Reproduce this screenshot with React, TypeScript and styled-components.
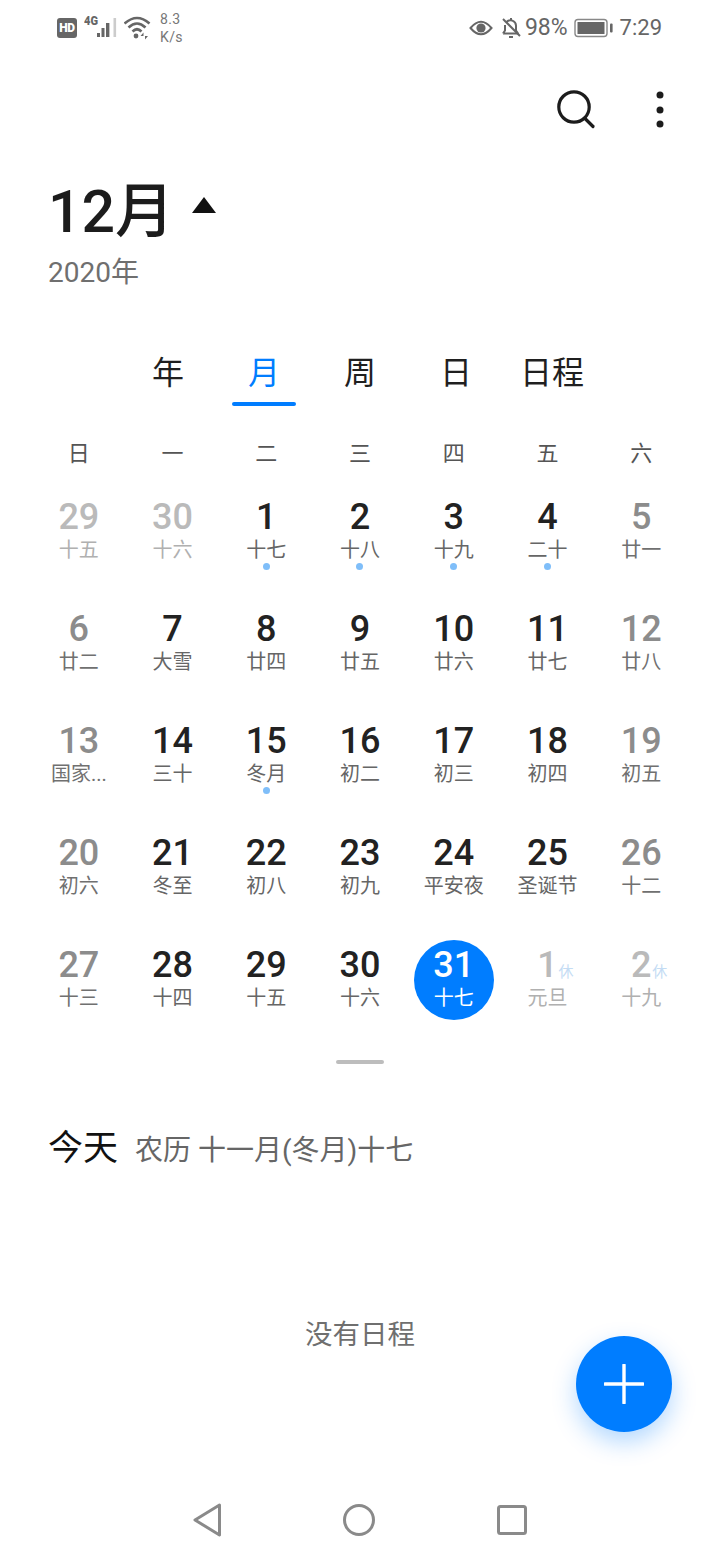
import React from "react";
import styled, { createGlobalStyle } from "styled-components";

const GlobalStyle = createGlobalStyle`
  html, body {
    margin: 0;
    padding: 0;
    background: #fff;
  }
  * {
    box-sizing: border-box;
  }
  body {
    font-family: Roboto, "Noto Sans CJK SC", sans-serif;
  }
`;

const Page = styled.div`
  position: relative;
  width: 720px;
  height: 1560px;
  overflow: hidden;
  background: #fff;
  display: flex;
  flex-direction: column;
`;

// status bar
const StatusBar = styled.div`
  height: 54px;
  padding: 1px 58px 0 57px;
  display: flex;
  align-items: center;
  justify-content: space-between;
  color: #6b6b6b;
`;

const StatusGroup = styled.div`
  display: flex;
  align-items: center;
`;

const StatusIcon = styled.svg<{ $ml?: number }>`
  display: block;
  flex: none;
  margin-left: ${(p) => p.$ml ?? 0}px;
`;

const HdBadge = styled.span`
  width: 20px;
  height: 20px;
  border-radius: 3px;
  background: #666;
  color: #fff;
  font-size: 12px;
  font-weight: 900;
  display: flex;
  align-items: center;
  justify-content: center;
  letter-spacing: -0.3px;
`;

const SignalWrap = styled.div`
  position: relative;
  width: 34px;
  height: 24px;
  margin-left: 7px;
`;

const FourG = styled.span`
  position: absolute;
  left: 0;
  top: -2px;
  font-size: 13px;
  line-height: 14px;
  font-weight: 900;
  color: #666;
  transform: scaleX(0.85);
  transform-origin: left top;
`;

const SpeedText = styled.div`
  margin-left: 8px;
  font-size: 14px;
  line-height: 18px;
  color: #777;
  letter-spacing: 0.4px;
`;

const StatusText = styled.span<{ $ml: number; $size: number }>`
  margin-left: ${(p) => p.$ml}px;
  font-size: ${(p) => p.$size}px;
  color: #666;
  line-height: 30px;
`;

// top toolbar
const Toolbar = styled.div`
  height: 112px;
  padding: 0 56px 0 0;
  display: flex;
  align-items: center;
  justify-content: flex-end;
  gap: 60px;
`;

// title block
const TitleBlock = styled.div`
  height: 177px;
  padding: 0 0 0 48px;
`;

const MonthRow = styled.div`
  display: flex;
  align-items: center;
  height: 76px;
  margin-top: 8px;
`;

const MonthText = styled.span`
  font-size: 59px;
  font-weight: 500;
  color: #1c1c1c;
  line-height: 76px;
`;

const Caret = styled.span`
  width: 0;
  height: 0;
  margin: -14px 0 0 18px;
  border-left: 12px solid transparent;
  border-right: 12px solid transparent;
  border-bottom: 16px solid #111;
`;

const YearText = styled.div`
  margin-top: 5px;
  font-size: 28px;
  line-height: 36px;
  color: #6f6f6f;
`;

// view tabs
const Tabs = styled.div`
  height: 66px;
  display: flex;
  justify-content: center;
`;

const Tab = styled.div<{ $active?: boolean }>`
  position: relative;
  width: 96px;
  height: 44px;
  text-align: center;
  font-size: 32px;
  line-height: 44px;
  margin-top: 8px;
  white-space: nowrap;
  color: ${(p) => (p.$active ? "#007dff" : "#1f1f1f")};

  ${(p) =>
    p.$active &&
    `&::after {
      content: "";
      position: absolute;
      left: 16px;
      top: 51px;
      width: 64px;
      height: 4px;
      border-radius: 2px;
      background: #007dff;
    }`}
`;

// calendar
const Weekdays = styled.div`
  margin: 14px 0 13px;
  padding: 0 32px;
  height: 56px;
  display: grid;
  grid-template-columns: repeat(7, 1fr);
  align-items: center;
  text-align: center;
  font-size: 22px;
  color: #555;
`;

const Grid = styled.div`
  padding: 0 32px;
  display: grid;
  grid-template-columns: repeat(7, 1fr);
  grid-auto-rows: 112px;
  justify-items: center;
`;

const DayBody = styled.div<{ $today?: boolean }>`
  position: relative;
  width: 80px;
  height: 80px;
  padding-top: 2px;
  border-radius: 50%;
  text-align: center;
  background: ${(p) => (p.$today ? "#007dff" : "transparent")};
`;

const tones = {
  normal: { num: "#222222", lunar: "#666666" },
  weekend: { num: "#8c8c8c", lunar: "#707070" },
  faded: { num: "#bababa", lunar: "#b0b0b0" },
  today: { num: "#ffffff", lunar: "#ffffff" },
};

type Tone = keyof typeof tones;

const DayNumber = styled.div<{ $tone: Tone }>`
  font-size: 36px;
  font-weight: 500;
  line-height: 46px;
  color: ${(p) => tones[p.$tone].num};
`;

const Lunar = styled.div<{ $tone: Tone }>`
  margin: 0 -6px;
  font-size: 20px;
  line-height: 20px;
  white-space: nowrap;
  color: ${(p) => tones[p.$tone].lunar};
`;

const EventDot = styled.div`
  width: 7px;
  height: 7px;
  margin: 3px auto 0;
  border-radius: 50%;
  background: #7fbef9;
`;

const RestBadge = styled.span`
  position: absolute;
  left: 51px;
  top: 23px;
  font-size: 15px;
  line-height: 18px;
  color: #c4dcf4;
`;

const Handle = styled.div`
  width: 48px;
  height: 4px;
  margin: 8px auto 0;
  border-radius: 2px;
  background: #bdbdbd;
`;

// today section
const TodayRow = styled.div`
  margin-top: 63px;
  padding-left: 48px;
  display: flex;
  align-items: baseline;
  gap: 17px;
`;

const TodayTitle = styled.span`
  font-size: 35px;
  font-weight: 400;
  line-height: 44px;
  color: #111;
`;

const TodayLunar = styled.span`
  font-size: 28px;
  color: #666;
`;

const EmptyText = styled.div`
  margin-top: 144px;
  text-align: center;
  font-size: 27.5px;
  line-height: 40px;
  color: #6f6f6f;
`;

const Fab = styled.button`
  position: absolute;
  left: 576px;
  top: 1336px;
  width: 96px;
  height: 96px;
  padding: 0;
  border: 0;
  border-radius: 50%;
  background: #007dff;
  box-shadow: 0 10px 24px rgba(0, 125, 255, 0.3);
  display: flex;
  align-items: center;
  justify-content: center;
`;

const NavBar = styled.div`
  margin-top: auto;
  height: 80px;
  display: flex;
  justify-content: center;
  align-items: center;
  gap: 122px;
`;

type Day = {
  n: number;
  lunar: string;
  tone: Tone;
  dot?: boolean;
  rest?: boolean;
};

const d = (n: number, lunar: string, tone: Tone = "normal", dot = false, rest = false): Day => ({
  n,
  lunar,
  tone,
  dot,
  rest,
});

const days: Day[] = [
  d(29, "十五", "faded"), d(30, "十六", "faded"), d(1, "十七", "normal", true), d(2, "十八", "normal", true),
  d(3, "十九", "normal", true), d(4, "二十", "normal", true), d(5, "廿一", "weekend"),
  d(6, "廿二", "weekend"), d(7, "大雪"), d(8, "廿四"), d(9, "廿五"), d(10, "廿六"), d(11, "廿七"), d(12, "廿八", "weekend"),
  d(13, "国家...", "weekend"), d(14, "三十"), d(15, "冬月", "normal", true), d(16, "初二"), d(17, "初三"), d(18, "初四"),
  d(19, "初五", "weekend"),
  d(20, "初六", "weekend"), d(21, "冬至"), d(22, "初八"), d(23, "初九"), d(24, "平安夜"), d(25, "圣诞节"), d(26, "十二", "weekend"),
  d(27, "十三", "weekend"), d(28, "十四"), d(29, "十五"), d(30, "十六"), d(31, "十七", "today"),
  d(1, "元旦", "faded", false, true), d(2, "十九", "faded", false, true),
];

const weekdays = ["日", "一", "二", "三", "四", "五", "六"];
const tabs = ["年", "月", "周", "日", "日程"];

const App: React.FC = () => (
  <Page>
    <GlobalStyle />
    <StatusBar>
      <StatusGroup>
        <HdBadge>HD</HdBadge>
        <SignalWrap>
          <FourG>4G</FourG>
          <svg width="34" height="24" viewBox="0 0 34 24">
            <rect x="13" y="17" width="3" height="4" fill="#666" />
            <rect x="17.5" y="12" width="3" height="9" fill="#666" />
            <rect x="22" y="7" width="3.4" height="14" fill="#666" />
            <rect x="29.5" y="2" width="2.6" height="19" fill="#ccc" />
          </svg>
        </SignalWrap>
        <StatusIcon width="28" height="24" viewBox="0 0 28 24" fill="none" $ml={6}>
          <path d="M0.5 7.5 Q13 -3.5 25.5 7.5" stroke="#666" strokeWidth="2.6" />
          <path d="M4.5 11.5 Q13 3.5 21.5 11.5" stroke="#666" strokeWidth="2.6" />
          <path d="M8.5 15.5 Q13 11 17.5 15.5" stroke="#666" strokeWidth="2.6" />
          <circle cx="12" cy="20" r="2.4" fill="#666" />
          <path d="M19.5 16.5 l-3 3.5 h3 z M21 23.5 l3 -3.5 h-3 z" fill="#666" />
        </StatusIcon>
        <SpeedText>
          8.3
          <br />
          K/s
        </SpeedText>
      </StatusGroup>
      <StatusGroup>
        <StatusIcon width="24" height="18" viewBox="0 0 24 18" fill="none">
          <path d="M1.5 9 Q12 -3.5 22.5 9 Q12 21.5 1.5 9 Z" stroke="#666" strokeWidth="2" />
          <circle cx="12" cy="9" r="4.6" fill="#666" />
        </StatusIcon>
        <StatusIcon width="22" height="24" viewBox="0 0 22 24" fill="none" $ml={7}>
          <path
            d="M3 17.5 h15 l-2 -3 v-5 a5.5 5.5 0 0 0 -9.5 -3.5 M5 9 v5.5 l-2 3"
            stroke="#666"
            strokeWidth="2"
            strokeLinejoin="round"
          />
          <path d="M9 21 h4" stroke="#666" strokeWidth="2" />
          <path d="M3 3 L20 20" stroke="#666" strokeWidth="2" />
          <path d="M11 2 v2" stroke="#666" strokeWidth="2" />
        </StatusIcon>
        <StatusText $ml={3} $size={23}>98%</StatusText>
        <StatusIcon width="40" height="20" viewBox="0 0 40 20" fill="none" $ml={6}>
          <rect x="1" y="1.5" width="32" height="17" rx="3" stroke="#888" strokeWidth="1.4" />
          <rect x="3.5" y="4" width="27" height="12" fill="#666" />
          <rect x="36" y="5.5" width="2.6" height="9" rx="1" fill="#666" />
        </StatusIcon>
        <StatusText $ml={6} $size={22}>7:29</StatusText>
      </StatusGroup>
    </StatusBar>

    <Toolbar>
      <svg width="40" height="40" viewBox="0 0 40 40" fill="none">
        <circle cx="18" cy="17" r="15.2" stroke="#1c1c1c" strokeWidth="3.2" />
        <path d="M29 28.5 L37 36.5" stroke="#1c1c1c" strokeWidth="3.2" strokeLinecap="round" />
      </svg>
      <svg width="8" height="40" viewBox="0 0 8 40" fill="#1c1c1c">
        <circle cx="4" cy="5" r="3.5" />
        <circle cx="4" cy="20" r="3.5" />
        <circle cx="4" cy="34" r="3.5" />
      </svg>
    </Toolbar>

    <TitleBlock>
      <MonthRow>
        <MonthText>12月</MonthText>
        <Caret />
      </MonthRow>
      <YearText>2020年</YearText>
    </TitleBlock>

    <Tabs>
      {tabs.map((t) => (
        <Tab key={t} $active={t === "月"}>
          {t}
        </Tab>
      ))}
    </Tabs>

    <Weekdays>
      {weekdays.map((w) => (
        <span key={w}>{w}</span>
      ))}
    </Weekdays>

    <Grid>
      {days.map((day, i) => (
        <DayBody key={i} $today={day.tone === "today"}>
          <DayNumber $tone={day.tone}>{day.n}</DayNumber>
          <Lunar $tone={day.tone}>{day.lunar}</Lunar>
          {day.dot && <EventDot />}
          {day.rest && <RestBadge>休</RestBadge>}
        </DayBody>
      ))}
    </Grid>

    <Handle />

    <TodayRow>
      <TodayTitle>今天</TodayTitle>
      <TodayLunar>农历 十一月(冬月)十七</TodayLunar>
    </TodayRow>

    <EmptyText>没有日程</EmptyText>

    <Fab aria-label="add">
      <svg width="40" height="40" viewBox="0 0 40 40">
        <path d="M20 1 V39 M1 20 H39" stroke="#fff" strokeWidth="3.4" strokeLinecap="round" />
      </svg>
    </Fab>

    <NavBar>
      <svg width="28" height="34" viewBox="0 0 28 34" fill="none">
        <path d="M26.5 2 L2 17 L26.5 32 Z" stroke="#8a8a8a" strokeWidth="3" strokeLinejoin="round" />
      </svg>
      <svg width="32" height="32" viewBox="0 0 32 32" fill="none">
        <circle cx="16" cy="16" r="14.5" stroke="#8a8a8a" strokeWidth="3" />
      </svg>
      <svg width="30" height="30" viewBox="0 0 30 30" fill="none">
        <rect x="1.5" y="1.5" width="27" height="27" rx="2" stroke="#8a8a8a" strokeWidth="3" />
      </svg>
    </NavBar>
  </Page>
);

export default App;
